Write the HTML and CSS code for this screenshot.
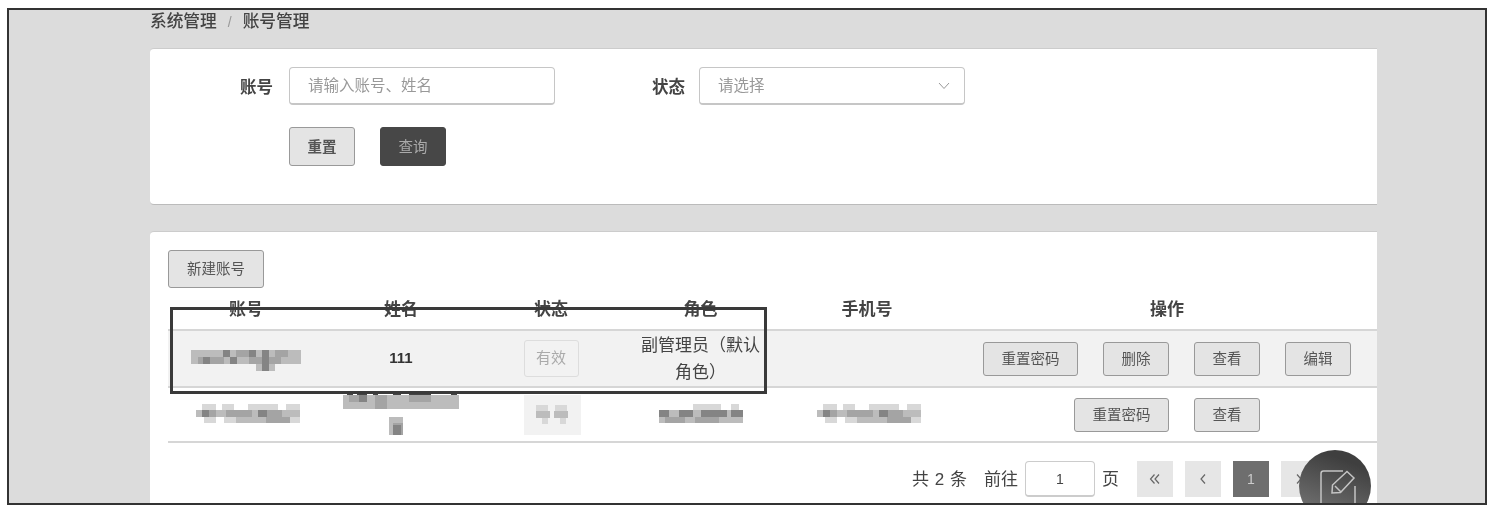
FILE: index.html
```html
<!DOCTYPE html>
<html lang="zh-CN">
<head>
<meta charset="utf-8">
<title>账号管理</title>
<link rel="stylesheet" href="styles.css">
</head>
<body>
<div class="frame">
  <main class="main">
    <nav class="crumb"><span>系统管理</span><span class="sep">/</span><span>账号管理</span></nav>
    <section class="card search">
      <div class="form-row">
        <label class="label label-first">账号</label>
        <div class="input placeholder">请输入账号、姓名</div>
        <label class="label label-second">状态</label>
        <div class="input placeholder select">请选择
          <svg class="chev" viewBox="0 0 12 8"><path d="M1 1l5 5.5L11 1"/></svg>
        </div>
      </div>
      <div class="btn-row">
        <button class="btn btn-form">重置</button>
        <button class="btn btn-form btn-dark">查询</button>
      </div>
    </section>
    <section class="card list">
      <button class="btn btn-new">新建账号</button>
      <table class="table">
        <thead>
          <tr>
            <th class="c1">账号</th><th class="c2">姓名</th><th class="c3">状态</th><th class="c4">角色</th><th class="c5">手机号</th><th class="c6">操作</th>
          </tr>
        </thead>
        <tbody>
          <tr class="row-hl">
            <td>
              <svg class="mosaic m-a" viewBox="0 0 110 21">
                <path class="t1" d="M0 0h110v14H0zM65 14h19v7H65z"/>
                <path class="t2" d="M7 7h26v7H7zM45 0h13v7H45zM84 0h13v7H84zM58 7h32v7H58z"/>
                <path class="t3" d="M32 0h7v7h-7zM58 0h7v7h-7zM71 0h7v21h-7zM39 7h7v7h-7zM12 7h7v7h-7z"/>
              </svg>
            </td>
            <td class="strong">111</td>
            <td><span class="tag">有效</span></td>
            <td class="role">副管理员（默认角色）</td>
            <td></td>
            <td class="ops">
              <button class="btn btn-op wide">重置密码</button>
              <button class="btn btn-op">删除</button>
              <button class="btn btn-op">查看</button>
              <button class="btn btn-op">编辑</button>
            </td>
          </tr>
          <tr>
            <td>
              <svg class="mosaic m-b" viewBox="0 0 104 19">
                <path class="t0" d="M6 0h14v6H6zM26 0h12v6H26zM52 0h30v6H52zM90 0h14v6H90zM8 13h12v6H8zM28 13h76v6H28z"/>
                <path class="t1" d="M0 6h104v7H0zM40 13h40v6H40z"/>
                <path class="t2" d="M6 6h14v7H6zM30 6h26v7H30zM66 6h20v7H66zM70 13h24v6H70z"/>
                <path class="t3" d="M6 6h7v7H6zM62 6h9v7h-9z"/>
              </svg>
            </td>
            <td>
              <svg class="mosaic m-c" viewBox="0 0 116 42">
                <path class="t4" d="M4 0h6v2H4zM14 0h10v2H14zM30 0h5v2h-5zM50 0h8v2h-8zM66 0h22v2H66zM108 0h6v2h-6z"/>
                <path class="t1" d="M0 2h116v14H0zM46 24h14v18H46z"/>
                <path class="t2" d="M6 2h14v7H6zM32 2h12v14H32zM66 2h22v7H66zM50 30h10v12H50z"/>
                <path class="t3" d="M16 2h8v7h-8zM50 32h8v10h-8z"/>
              </svg>
            </td>
            <td>
              <span class="blur-tag">
                <svg class="mosaic m-d" viewBox="0 0 32 19">
                  <path class="t0" d="M0 0h12v6H0zM19 0h12v6H19zM6 13h6v6H6zM24 13h6v6h-6z"/>
                  <path class="t1" d="M0 6h14v7H0zM18 6h14v7H18z"/>
                </svg>
              </span>
            </td>
            <td>
              <svg class="mosaic m-e" viewBox="0 0 84 19">
                <path class="t0" d="M34 0h28v6H34zM72 0h8v6h-8z"/>
                <path class="t1" d="M0 6h84v13H0z"/>
                <path class="t2" d="M6 13h20v6H6zM36 13h24v6H36z"/>
                <path class="t3" d="M0 6h10v7H0zM20 6h14v7H20zM42 6h26v7H42zM72 6h12v7H72z"/>
              </svg>
            </td>
            <td>
              <svg class="mosaic m-b" viewBox="0 0 104 19">
                <path class="t0" d="M6 0h14v6H6zM26 0h12v6H26zM52 0h30v6H52zM90 0h14v6H90zM8 13h12v6H8zM28 13h76v6H28z"/>
                <path class="t1" d="M0 6h104v7H0zM40 13h40v6H40z"/>
                <path class="t2" d="M6 6h14v7H6zM30 6h26v7H30zM66 6h20v7H66zM70 13h24v6H70z"/>
                <path class="t3" d="M6 6h7v7H6zM62 6h9v7h-9z"/>
              </svg>
            </td>
            <td class="ops">
              <button class="btn btn-op wide">重置密码</button>
              <button class="btn btn-op">查看</button>
            </td>
          </tr>
        </tbody>
      </table>
      <div class="pager">
        <span class="pg-total">共 2 条</span>
        <span class="pg-go">前往</span>
        <span class="pg-input">1</span>
        <span class="pg-unit">页</span>
        <span class="pg-btn"><svg class="pg-ico" viewBox="0 0 12 12"><path d="M5.500 1.500L1.500 6l4 4.500M10 1.500L6 6l4 4.500"/></svg></span>
        <span class="pg-btn"><svg class="pg-ico" viewBox="0 0 12 12"><path d="M8 1.500L4 6l4 4.500"/></svg></span>
        <span class="pg-btn active">1</span>
        <span class="pg-btn"><svg class="pg-ico" viewBox="0 0 12 12"><path d="M4 1.500L8 6l-4 4.500"/></svg></span>
      </div>
    </section>
  </main>
  <div class="annotation"></div>
  <div class="fab">
    <svg viewBox="0 0 72 72">
      <path d="M44 21H24.500a2.500 2.500 0 0 0-2.500 2.500V60h34V36"/>
      <path d="M48 21.500l7 6.500-13.500 14.500-8.500.5.500-8z"/>
      <path d="M36 36l6 6"/>
    </svg>
  </div>
</div>
</body>
</html>
```
FILE: styles.css
```css
* { box-sizing: border-box; }
html, body { margin: 0; padding: 0; background: #fff; }
body {
  padding: 8px 7px 0;
  font-family: "Liberation Sans", "Noto Sans CJK SC", sans-serif;
  color: #333;
}
.frame {
  position: relative;
  width: 1480px;
  height: 497px;
  border: 2px solid #333;
  background: #dcdcdc;
  overflow: hidden;
  filter: blur(0.350px);
}
.main { width: 1227px; margin-left: 141px; }
.crumb {
  height: 38px;
  padding-top: 1px;
  font-size: 16.700px;
  font-weight: 500;
  line-height: 22px;
  color: #444;
  display: flex;
}
.sep { margin: 0 11px; color: #999; font-size: 14px; font-weight: 400; }
.card {
  background: #fff;
  border-top: 1px solid #ccc;
  border-bottom: 1px solid #bbb;
  border-radius: 4px 0 0 4px;
}
.search { height: 157px; padding-top: 18px; margin-bottom: 26px; }
.form-row { display: flex; align-items: center; height: 38px; }
.label { font-size: 16.500px; font-weight: 700; color: #444; text-align: right; }
.label-first { width: 123px; margin-right: 16px; }
.label-second { width: 131px; margin-right: 14px; }
.input {
  position: relative;
  width: 266px;
  height: 38px;
  border: 1px solid #c6c6c6;
  border-bottom-width: 2px;
  border-radius: 4px;
  background: #fff;
}
.input + .label-second { width: 130px; }
.placeholder { padding-left: 18px; font-size: 15.500px; line-height: 35px; color: #999; }
.select { display: flex; justify-content: space-between; align-items: center; padding-right: 14px; }
.chev { width: 12px; height: 8px; fill: none; stroke: #999; stroke-width: 1; }
.btn-row { display: flex; gap: 25px; margin: 22px 0 0 139px; }
.btn {
  font-family: inherit;
  border: 1px solid #999;
  border-radius: 3px;
  background: #e4e4e4;
  color: #555;
  padding: 0 0 3px;
}
.btn-form { width: 66px; height: 39px; font-size: 14.500px; font-weight: 700; }
.btn-dark { background: #474747; border-color: #474747; color: #aaa; font-weight: 400; }
.list { height: 300px; padding: 18px 0 0 18px; }
.btn-new { display: block; width: 96px; height: 38px; font-size: 14.500px; }
.table { width: 1209px; border-collapse: collapse; table-layout: fixed; }
.table th {
  height: 42px;
  padding: 0 0 3px;
  border-bottom: 2px solid #d6d6d6;
  font-size: 17px;
  font-weight: 700;
  color: #444;
}
.table td {
  height: 55px;
  padding: 0;
  border-bottom: 2px solid #d6d6d6;
  text-align: center;
  font-size: 16px;
  color: #444;
}
.c1 { width: 156px; }
.c2 { width: 154px; }
.c3 { width: 146px; }
.c4 { width: 153px; }
.c5 { width: 180px; }
.c6 { width: 420px; }
.table .row-hl td { height: 57px; background: #f2f2f2; }
.table .strong { padding-bottom: 3px; font-weight: 700; font-size: 15px; color: #333; }
.table .role { padding: 0 13px; font-size: 17px; line-height: 27px; color: #444; }
.tag {
  display: inline-block;
  width: 55px;
  height: 37px;
  border: 1px solid #ddd;
  border-radius: 3px;
  font-size: 15px;
  line-height: 33px;
  color: #aaa;
  vertical-align: middle;
}
.blur-tag {
  display: inline-flex;
  align-items: center;
  justify-content: center;
  width: 57px;
  height: 40px;
  margin-left: 2px;
  background: #f2f2f2;
  vertical-align: middle;
}
.mosaic { display: inline-block; vertical-align: middle; margin-bottom: 2px; filter: blur(0.700px); }
.m-a { width: 110px; height: 21px; margin-top: 3px; margin-bottom: 0; }
.m-b { width: 104px; height: 19px; margin-left: 4px; }
.m-c { width: 116px; height: 42px; }
.m-d { width: 32px; height: 19px; margin-bottom: 0; }
.m-e { width: 84px; height: 19px; }
.t0 { fill: #d8d8d8; }
.t1 { fill: #bcbcbc; }
.t2 { fill: #a4a4a4; }
.t3 { fill: #848484; }
.t4 { fill: #444; }
.table .ops { font-size: 0; }
.btn-op { width: 66px; height: 34px; font-size: 14.500px; margin-left: 25px; vertical-align: middle; }
.btn-op.wide { width: 95px; margin-left: 0; }
.pager {
  display: flex;
  align-items: center;
  justify-content: flex-end;
  height: 36px;
  margin-top: 18px;
  padding-right: 60px;
  font-size: 17px;
  color: #444;
}
.pg-total { margin-right: 17px; padding-bottom: 3px; word-spacing: 1px; }
.pg-go { padding-bottom: 3px; }
.pg-input {
  width: 70px;
  height: 36px;
  margin: 0 7px;
  border: 1px solid #ccc;
  border-bottom-width: 2px;
  border-radius: 4px;
  text-align: center;
  line-height: 34px;
  font-size: 14px;
}
.pg-unit { margin-right: 18px; padding-bottom: 3px; }
.pg-btn {
  display: flex;
  align-items: center;
  justify-content: center;
  width: 36px;
  height: 36px;
  margin-left: 12px;
  background: #e6e6e6;
  color: #666;
  font-size: 14px;
}
.pg-unit + .pg-btn { margin-left: 0; }
.pg-ico { width: 12px; height: 12px; fill: none; stroke: #666; stroke-width: 1.200; }
.pg-btn.active { background: #6e6e6e; color: #ccc; }
.annotation {
  position: absolute;
  left: 161px;
  top: 297px;
  width: 597px;
  height: 87px;
  border: 3px solid #3a3a3a;
}
.fab {
  position: absolute;
  left: 1290px;
  top: 440px;
  width: 72px;
  height: 72px;
  border-radius: 50%;
  background: linear-gradient(200deg, #3f3f3f 20%, #787878 95%);
}
.fab svg { display: block; width: 72px; height: 72px; fill: none; stroke: #c4c4c4; stroke-width: 1.500; }
```
